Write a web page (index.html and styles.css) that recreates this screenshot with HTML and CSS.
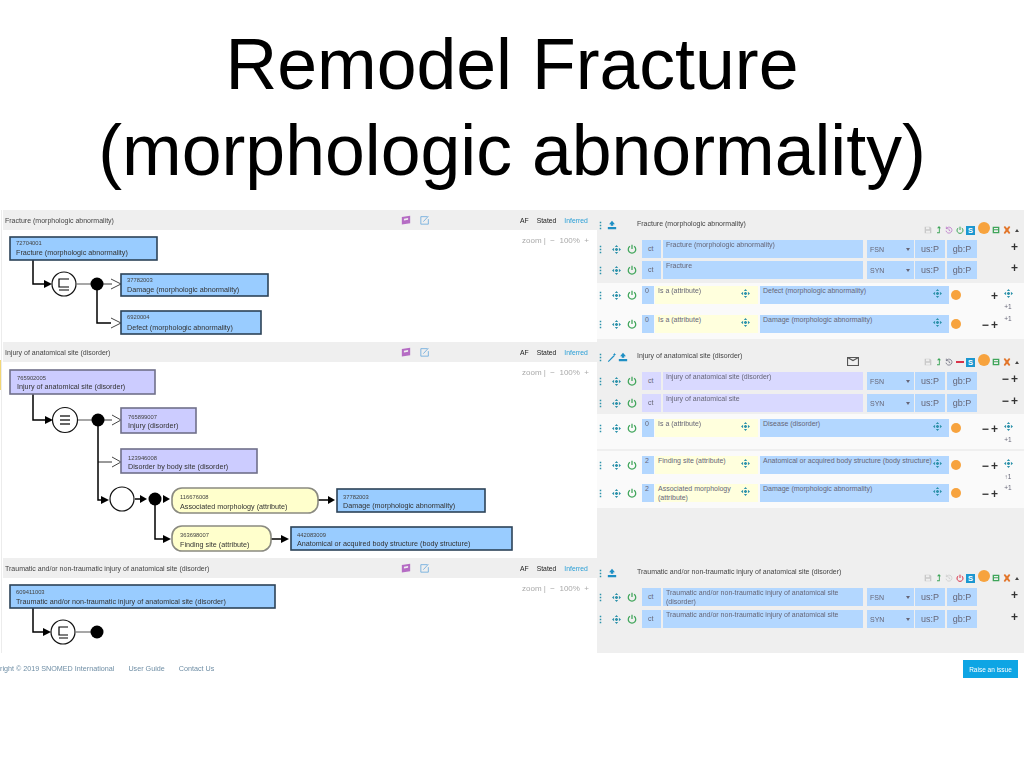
FILE: index.html
```html
<!DOCTYPE html>
<html lang="en">
<head>
<meta charset="UTF-8">
<title>Remodel Fracture (morphologic abnormality)</title>
<link rel="stylesheet" href="styles.css">
</head>
<body>

<svg class="defs" width="0" height="0">
  <symbol id="i-grip" viewBox="0 0 4 12"><path d="M1 1h2v2H1zM1 5h2v2H1zM1 9h2v2H1z"/></symbol>
  <symbol id="i-move" viewBox="0 0 12 12"><path d="M6 0l2.200 2.800H3.800zM6 12l2.200-2.800H3.800zM0 6l2.800-2.200v4.400zM12 6l-2.800-2.200v4.400zM5 4h2v4H5zM4 5h4v2H4z"/></symbol>
  <symbol id="i-power" viewBox="0 0 12 12"><path d="M3.500 2.800a4.500 4.500 0 1 0 5 0M6 1v5" fill="none" stroke="currentColor" stroke-width="1.500"/></symbol>
  <symbol id="i-publish" viewBox="0 0 12 12"><path d="M6 1l3.500 4h-2v2h-3V5h-2zM1 8.500h10V11H1z"/></symbol>
  <symbol id="i-wand" viewBox="0 0 12 12"><path d="M1 11l7-7 1 1-7 7zM9 1l.6 1.400L11 3l-1.400.6L9 5l-.6-1.400L7 3l1.400-.6z"/></symbol>
  <symbol id="i-save" viewBox="0 0 12 12"><path d="M1 1h8l2 2v8H1zM3 2v3h5V2zM3 7v3h6V7z" fill-rule="evenodd"/></symbol>
  <symbol id="i-up" viewBox="0 0 12 12"><path d="M6 0l3 3.500H7.200V11H3v-1.500h2.800v-6H3z"/></symbol>
  <symbol id="i-hist" viewBox="0 0 12 12"><path d="M2 4a4.500 4.500 0 1 1-.5 3M2 1v3h3M6 4v2.500l2 1" fill="none" stroke="currentColor" stroke-width="1.100"/></symbol>
  <symbol id="i-copy" viewBox="0 0 12 12"><path d="M1 1h10v10H1zM3 3v2h6V3zM3 6.500v2.500h6V6.500z" fill-rule="evenodd"/></symbol>
  <symbol id="i-close" viewBox="0 0 12 12"><path d="M1 1.500L3 0l3 3.500L9 0l2 1.500L8 6l3 4.500L9 12 6 8.500 3 12l-2-1.500L4 6z"/></symbol>
  <symbol id="i-book" viewBox="0 0 12 12"><path d="M1 2.500L11 1v9L1 11.500zM3.500 4.500v2l5-.8v-2z" fill-rule="evenodd"/></symbol>
  <symbol id="i-edit" viewBox="0 0 12 12"><path d="M1 2h8M1 2v9h9V5M4 8l6-6.500" fill="none" stroke="currentColor" stroke-width="1"/></symbol>
  <symbol id="i-mail" viewBox="0 0 12 10"><path d="M.5 1.500h11v8H.5zM.5 1.500l5.500 3 5.500-3" fill="none" stroke="currentColor" stroke-width="1.200"/></symbol>
</svg>

<h1 class="title">Remodel Fracture<br>(morphologic abnormality)</h1>

<div class="shot">
  <div class="work">
    <span class="pin"></span>

    <div class="left">
      <div class="lhead">
        <span class="lname">Fracture (morphologic abnormality)</span>
        <svg class="ico c-purple"><use href="#i-book"/></svg>
        <svg class="ico c-sky"><use href="#i-edit"/></svg>
        <span class="tabs"><span>AF</span><span>Stated</span><span class="on">Inferred</span></span>
      </div>
      <svg class="graph graph-a" viewBox="2 230 594 111">
        <text class="zoomline" x="521" y="243">zoom |  −  100%  +</text>
        <path class="thick" d="M32 260V284H44"/>
        <path class="solid" d="M43 280l8 4-8 4z"/>
        <circle class="op" cx="63" cy="284" r="12"/>
        <path class="sym" d="M68 279H58V287H68M58 290H68"/>
        <path class="grey" d="M75 284H90"/>
        <circle class="dot" cx="96" cy="284" r="6.500"/>
        <path class="thick" d="M96 290V323H110"/>
        <path class="thin" d="M102 284H111"/>
        <path class="open" d="M110 279L120 284L110 289M110 318L120 323L110 328"/>
        <rect class="node" x="9" y="237" width="147" height="23"/>
        <text class="sid" x="15" y="245">72704001</text><text class="lab" x="15" y="255">Fracture (morphologic abnormality)</text>
        <rect class="node" x="120" y="274" width="147" height="22"/>
        <text class="sid" x="126" y="282">37782003</text><text class="lab" x="126" y="292">Damage (morphologic abnormality)</text>
        <rect class="node" x="120" y="311" width="140" height="23"/>
        <text class="sid" x="126" y="319">6920004</text><text class="lab" x="126" y="330">Defect (morphologic abnormality)</text>
      </svg>

      <div class="lhead">
        <span class="lname">Injury of anatomical site (disorder)</span>
        <svg class="ico c-purple"><use href="#i-book"/></svg>
        <svg class="ico c-sky"><use href="#i-edit"/></svg>
        <span class="tabs"><span>AF</span><span>Stated</span><span class="on">Inferred</span></span>
      </div>
      <svg class="graph graph-b" viewBox="2 362 594 195">
        <text class="zoomline" x="521" y="375">zoom |  −  100%  +</text>
        <path class="thick" d="M32 394V420H46"/>
        <path class="solid" d="M44 416l8 4-8 4z"/>
        <circle class="op" cx="64" cy="420" r="12.500"/>
        <path class="sym bold" d="M59 416H69M59 420H69M59 424H69"/>
        <path class="grey" d="M77 420H91"/>
        <circle class="dot" cx="97" cy="420" r="6.500"/>
        <path class="thin" d="M103 420H111M97 462H111"/>
        <path class="open" d="M111 415L120 420L111 425M111 457L120 462L111 467"/>
        <path class="thick" d="M97 426V500H104"/>
        <path class="solid" d="M100 496l8 4-8 4z"/>
        <circle class="op" cx="121" cy="499" r="12"/>
        <path class="thick" d="M134 499H140"/>
        <path class="solid" d="M139 495l7 4-7 4z"/>
        <circle class="dot" cx="154" cy="499" r="6.500"/>
        <path class="solid" d="M162 495l7 4-7 4z"/>
        <path class="thick" d="M154 505V539H164"/>
        <path class="solid" d="M162 535l8 4-8 4z"/>
        <path class="thin2" d="M317 500H330M270 539H282"/>
        <path class="solid" d="M327 496l7 4-7 4zM280 535l8 4-8 4z"/>
        <rect class="node lav" x="120" y="408" width="75" height="25"/>
        <text class="sid" x="127" y="419">765899007</text><text class="lab" x="127" y="428">Injury (disorder)</text>
        <rect class="node lav" x="120" y="449" width="136" height="24"/>
        <text class="sid" x="127" y="460">123946008</text><text class="lab" x="127" y="469">Disorder by body site (disorder)</text>
        <rect class="node lav" x="9" y="370" width="145" height="24"/>
        <text class="sid" x="16" y="380">765902005</text><text class="lab" x="16" y="389">Injury of anatomical site (disorder)</text>
        <rect class="pill" x="171" y="488" width="146" height="25" rx="10"/>
        <text class="sid" x="179" y="499">116676008</text><text class="lab" x="179" y="509">Associated morphology (attribute)</text>
        <rect class="pill" x="171" y="526" width="99" height="25" rx="10"/>
        <text class="sid" x="179" y="537">363698007</text><text class="lab" x="179" y="547">Finding site (attribute)</text>
        <rect class="node" x="336" y="489" width="148" height="23"/>
        <text class="sid" x="342" y="499">37782003</text><text class="lab" x="342" y="508">Damage (morphologic abnormality)</text>
        <rect class="node" x="290" y="527" width="221" height="23"/>
        <text class="sid" x="296" y="537">442083009</text><text class="lab" x="296" y="546">Anatomical or acquired body structure (body structure)</text>
      </svg>

      <div class="lhead">
        <span class="lname">Traumatic and/or non-traumatic injury of anatomical site (disorder)</span>
        <svg class="ico c-purple"><use href="#i-book"/></svg>
        <svg class="ico c-sky"><use href="#i-edit"/></svg>
        <span class="tabs"><span>AF</span><span>Stated</span><span class="on">Inferred</span></span>
      </div>
      <svg class="graph graph-c" viewBox="2 578 594 74">
        <text class="zoomline" x="521" y="591">zoom |  −  100%  +</text>
        <path class="thick" d="M32 608V632H44"/>
        <path class="solid" d="M42 628l8 4-8 4z"/>
        <circle class="op" cx="62" cy="632" r="12"/>
        <path class="sym" d="M67 627H58V635H67M58 638H67"/>
        <path class="grey" d="M75 632H90"/>
        <circle class="dot" cx="96" cy="632" r="6.500"/>
        <rect class="node" x="9" y="585" width="265" height="23"/>
        <text class="sid" x="15" y="594">609411003</text><text class="lab" x="15" y="604">Traumatic and/or non-traumatic injury of anatomical site (disorder)</text>
      </svg>
    </div>

    <div class="right">

      <div class="chead head-a">
        <span class="tools">
          <svg class="grip c-teal"><use href="#i-grip"/></svg>
          <svg class="ico c-blue"><use href="#i-publish"/></svg>
        </span>
        <span class="cname">Fracture (morphologic abnormality)</span>
        <span class="acts">
          <svg class="ico-s c-grey"><use href="#i-save"/></svg>
          <svg class="ico-s c-green"><use href="#i-up"/></svg>
          <svg class="ico-s c-purple"><use href="#i-hist"/></svg>
          <svg class="ico-s c-green"><use href="#i-power"/></svg>
          <span class="sbox">S</span>
          <span class="ball ball-up"></span>
          <svg class="ico-s c-green"><use href="#i-copy"/></svg>
          <svg class="ico-s c-orange"><use href="#i-close"/></svg>
          <span class="caret"></span>
        </span>
      </div>
      <div class="descs tight">
        <div class="row">
          <svg class="grip c-teal"><use href="#i-grip"/></svg><svg class="mv c-teal"><use href="#i-move"/></svg><svg class="pw c-green"><use href="#i-power"/></svg>
          <span class="cell ct">ct</span><span class="cell term">Fracture (morphologic abnormality)</span><span class="cell sel">FSN</span><span class="cell acc">us:P</span><span class="cell acc acc2">gb:P</span><span class="ops ops-d">+</span>
        </div>
        <div class="row">
          <svg class="grip c-teal"><use href="#i-grip"/></svg><svg class="mv c-teal"><use href="#i-move"/></svg><svg class="pw c-green"><use href="#i-power"/></svg>
          <span class="cell ct">ct</span><span class="cell term">Fracture</span><span class="cell sel">SYN</span><span class="cell acc">us:P</span><span class="cell acc acc2">gb:P</span><span class="ops ops-d">+</span>
        </div>
      </div>
      <div class="rels rels-a">
        <div class="row">
          <svg class="grip c-teal"><use href="#i-grip"/></svg><svg class="mv c-teal"><use href="#i-move"/></svg><svg class="pw c-green"><use href="#i-power"/></svg>
          <span class="cell num">0</span><span class="cell attr">Is a (attribute)<svg class="mv-in c-teal"><use href="#i-move"/></svg></span><span class="cell target">Defect (morphologic abnormality)<svg class="mv-in c-teal"><use href="#i-move"/></svg></span><span class="ball"></span><span class="ops ops-r">+</span>
          <span class="side"><svg class="mv c-teal"><use href="#i-move"/></svg><span>+1</span></span>
        </div>
        <div class="row">
          <svg class="grip c-teal"><use href="#i-grip"/></svg><svg class="mv c-teal"><use href="#i-move"/></svg><svg class="pw c-green"><use href="#i-power"/></svg>
          <span class="cell num">0</span><span class="cell attr">Is a (attribute)<svg class="mv-in c-teal"><use href="#i-move"/></svg></span><span class="cell target">Damage (morphologic abnormality)<svg class="mv-in c-teal"><use href="#i-move"/></svg></span><span class="ball"></span><span class="ops ops-r">− +</span>
          <span class="side"><span>+1</span></span>
        </div>
      </div>

      <div class="chead head-b">
        <span class="tools">
          <svg class="grip c-teal"><use href="#i-grip"/></svg>
          <svg class="ico c-blue tool-wand"><use href="#i-wand"/></svg>
          <svg class="ico c-blue"><use href="#i-publish"/></svg>
        </span>
        <span class="cname cname-b">Injury of anatomical site (disorder)</span>
        <svg class="mail"><use href="#i-mail"/></svg>
        <span class="acts">
          <svg class="ico-s c-grey"><use href="#i-save"/></svg>
          <svg class="ico-s c-green"><use href="#i-up"/></svg>
          <svg class="ico-s c-slate"><use href="#i-hist"/></svg>
          <span class="dash"></span>
          <span class="sbox">S</span>
          <span class="ball ball-up"></span>
          <svg class="ico-s c-green"><use href="#i-copy"/></svg>
          <svg class="ico-s c-orange"><use href="#i-close"/></svg>
          <span class="caret"></span>
        </span>
      </div>
      <div class="descs">
        <div class="row lav-row">
          <svg class="grip c-teal"><use href="#i-grip"/></svg><svg class="mv c-teal"><use href="#i-move"/></svg><svg class="pw c-green"><use href="#i-power"/></svg>
          <span class="cell ct">ct</span><span class="cell term">Injury of anatomical site (disorder)</span><span class="cell sel">FSN</span><span class="cell acc">us:P</span><span class="cell acc acc2">gb:P</span><span class="ops ops-d">− +</span>
        </div>
        <div class="row lav-row">
          <svg class="grip c-teal"><use href="#i-grip"/></svg><svg class="mv c-teal"><use href="#i-move"/></svg><svg class="pw c-green"><use href="#i-power"/></svg>
          <span class="cell ct">ct</span><span class="cell term">Injury of anatomical site</span><span class="cell sel">SYN</span><span class="cell acc">us:P</span><span class="cell acc acc2">gb:P</span><span class="ops ops-d">− +</span>
        </div>
      </div>
      <div class="rels rels-b1">
        <div class="row">
          <svg class="grip c-teal"><use href="#i-grip"/></svg><svg class="mv c-teal"><use href="#i-move"/></svg><svg class="pw c-green"><use href="#i-power"/></svg>
          <span class="cell num">0</span><span class="cell attr">Is a (attribute)<svg class="mv-in c-teal"><use href="#i-move"/></svg></span><span class="cell target">Disease (disorder)<svg class="mv-in c-teal"><use href="#i-move"/></svg></span><span class="ball"></span><span class="ops ops-r">− +</span>
          <span class="side"><svg class="mv c-teal"><use href="#i-move"/></svg><span>+1</span></span>
        </div>
      </div>
      <div class="rels rels-b2">
        <div class="row">
          <svg class="grip c-teal"><use href="#i-grip"/></svg><svg class="mv c-teal"><use href="#i-move"/></svg><svg class="pw c-green"><use href="#i-power"/></svg>
          <span class="cell num">2</span><span class="cell attr">Finding site (attribute)<svg class="mv-in c-teal"><use href="#i-move"/></svg></span><span class="cell target">Anatomical or acquired body structure (body structure)<svg class="mv-in c-teal"><use href="#i-move"/></svg></span><span class="ball"></span><span class="ops ops-r">− +</span>
          <span class="side"><svg class="mv c-teal"><use href="#i-move"/></svg><span>↑1</span></span>
        </div>
        <div class="row">
          <svg class="grip c-teal"><use href="#i-grip"/></svg><svg class="mv c-teal"><use href="#i-move"/></svg><svg class="pw c-green"><use href="#i-power"/></svg>
          <span class="cell num">2</span><span class="cell attr">Associated morphology (attribute)<svg class="mv-in c-teal"><use href="#i-move"/></svg></span><span class="cell target">Damage (morphologic abnormality)<svg class="mv-in c-teal"><use href="#i-move"/></svg></span><span class="ball"></span><span class="ops ops-r">− +</span>
          <span class="side"><span>+1</span></span>
        </div>
      </div>

      <div class="chead head-c">
        <span class="tools">
          <svg class="grip c-teal"><use href="#i-grip"/></svg>
          <svg class="ico c-blue"><use href="#i-publish"/></svg>
        </span>
        <span class="cname">Traumatic and/or non-traumatic injury of anatomical site (disorder)</span>
        <span class="acts">
          <svg class="ico-s c-grey"><use href="#i-save"/></svg>
          <svg class="ico-s c-green"><use href="#i-up"/></svg>
          <svg class="ico-s c-grey"><use href="#i-hist"/></svg>
          <svg class="ico-s c-red"><use href="#i-power"/></svg>
          <span class="sbox">S</span>
          <span class="ball ball-up"></span>
          <svg class="ico-s c-green"><use href="#i-copy"/></svg>
          <svg class="ico-s c-orange"><use href="#i-close"/></svg>
          <span class="caret"></span>
        </span>
      </div>
      <div class="descs">
        <div class="row">
          <svg class="grip c-teal"><use href="#i-grip"/></svg><svg class="mv c-teal"><use href="#i-move"/></svg><svg class="pw c-green"><use href="#i-power"/></svg>
          <span class="cell ct">ct</span><span class="cell term">Traumatic and/or non-traumatic injury of anatomical site (disorder)</span><span class="cell sel">FSN</span><span class="cell acc">us:P</span><span class="cell acc acc2">gb:P</span><span class="ops ops-d">+</span>
        </div>
        <div class="row">
          <svg class="grip c-teal"><use href="#i-grip"/></svg><svg class="mv c-teal"><use href="#i-move"/></svg><svg class="pw c-green"><use href="#i-power"/></svg>
          <span class="cell ct">ct</span><span class="cell term">Traumatic and/or non-traumatic injury of anatomical site</span><span class="cell sel">SYN</span><span class="cell acc">us:P</span><span class="cell acc acc2">gb:P</span><span class="ops ops-d">+</span>
        </div>
      </div>

    </div>
  </div>

  <div class="foot">
    <div class="links">
      <span>right © 2019 SNOMED International</span>
      <span>User Guide</span>
      <span>Contact Us</span>
    </div>
    <button class="issue">Raise an issue</button>
  </div>
</div>

</body>
</html>
```

FILE: styles.css
```css
body {
    margin: 0;
    background: #fff;
    font-family: "Liberation Sans", Arial, sans-serif;
    color: #000;
}
.defs {
    display: block;
    height: 0;
}
.title {
    margin: 0;
    height: 189px;
    padding: 21px 0 0;
    font-size: 71.6px;
    font-weight: 400;
    line-height: 86px;
    text-align: center;
}

/* the pasted screenshot */
.shot {
    overflow: hidden;
    filter: blur(0.45px);
}
.work {
    display: flex;
    height: 443px;
    position: relative;
}
.pin {
    position: absolute;
    left: 0;
    top: 150px;
    width: 1px;
    height: 30px;
    background: #f2d675;
}

/* left column: diagrams */
.left {
    width: 594px;
    margin-left: 1px;
    padding-left: 1px;
    border-left: 1px solid #ececec;
    box-sizing: content-box;
    flex: none;
}
.lhead {
    display: flex;
    align-items: center;
    height: 20px;
    background: #efefef;
    font-size: 7px;
    color: #444;
}
.lhead + .graph + .lhead {
    margin-top: 1px;
}
.lname {
    width: 398px;
    padding-left: 2px;
    box-sizing: border-box;
    white-space: nowrap;
}
.tabs {
    display: flex;
    gap: 8px;
    margin-left: 90px;
    font-size: 6.800px;
    color: #222;
}
.tabs .on {
    color: #2a9fd6;
}
.graph {
    display: block;
    width: 594px;
    background: #fff;
}
.graph-a { height: 111px; }
.graph-b { height: 195px; }
.graph-c { height: 74px; }
.zoomline {
    font-size: 8px;
    fill: #aaa;
    white-space: pre;
}
.thick, .thin, .thin2, .grey, .sym, .open {
    fill: none;
    stroke: #000;
}
.thick { stroke-width: 1.5; }
.thin { stroke-width: 0.8; }
.thin2 { stroke-width: 1.3; }
.grey { stroke: #777; stroke-width: 1.3; }
.sym { stroke-width: 1.2; }
.sym.bold { stroke-width: 1.5; stroke: #333; }
.open { stroke: #444; stroke-width: 1; }
.solid { fill: #000; }
.dot { fill: #000; }
.op {
    fill: #fff;
    stroke: #111;
    stroke-width: 1.2;
}
.node {
    fill: #99ccff;
    stroke: #2c4358;
    stroke-width: 1.6;
}
.node.lav {
    fill: #ccccff;
    stroke: #70708a;
}
.pill {
    fill: #ffffcc;
    stroke: #8a8a80;
    stroke-width: 1.6;
}
.sid {
    font-size: 5.800px;
    fill: #444;
}
.lab {
    font-size: 7.200px;
    fill: #333;
}

/* icons */
.ico {
    width: 10px;
    height: 10px;
    flex: none;
    fill: currentColor;
}
.lhead .ico + .ico {
    margin-left: 9px;
}
.ico-s {
    width: 8px;
    height: 8px;
    flex: none;
    fill: currentColor;
}
.grip {
    width: 3px;
    height: 9px;
    flex: none;
    fill: currentColor;
}
.mv {
    width: 9px;
    height: 9px;
    flex: none;
    fill: currentColor;
}
.pw {
    width: 10px;
    height: 10px;
    flex: none;
    fill: currentColor;
}
.c-purple { color: #b56cc4; }
.c-sky { color: #6aa9dc; }
.c-teal { color: #2f93ab; }
.c-blue { color: #1e8fc4; }
.c-green { color: #3fa55a; }
.c-grey { color: #c9c9c9; }
.c-slate { color: #667; }
.c-orange { color: #e2762b; }
.c-red { color: #d9344a; }

/* right column: concept editor */
.right {
    flex: 1;
    background: #efefef;
    font-size: 7px;
    color: #667;
}
.chead {
    display: flex;
    align-items: flex-end;
}
.head-a { height: 30px; }
.head-b { height: 33px; }
.head-c { height: 80px; }
.tools {
    display: flex;
    align-items: center;
    width: 40px;
    height: 10px;
    margin-bottom: 10px;
    flex: none;
}
.tools .grip {
    margin: 0 5px 0 2px;
}
.tool-wand {
    margin-right: 1px;
}
.cname {
    line-height: 10px;
    margin-bottom: 11px;
    font-size: 7px;
    color: #444;
    white-space: nowrap;
}
.cname-b {
    width: 210px;
}
.mail {
    width: 12px;
    height: 10px;
    margin-bottom: 6px;
    color: #555;
    flex: none;
}
.acts {
    display: flex;
    align-items: center;
    gap: 2.500px;
    height: 10px;
    margin-left: auto;
    margin-bottom: 5px;
    padding-right: 5px;
}
.sbox {
    width: 9px;
    height: 9px;
    background: #1c97d0;
    color: #fff;
    font-size: 7.500px;
    font-weight: 700;
    line-height: 9px;
    text-align: center;
}
.dash {
    width: 8px;
    height: 2px;
    background: #d9344a;
}
.caret {
    width: 0;
    height: 0;
    margin-left: 2px;
    border: 2.500px solid transparent;
    border-top: 0;
    border-bottom: 3px solid #444;
}
.ball {
    width: 10px;
    height: 10px;
    margin: 4px 0 0 2px;
    border-radius: 50%;
    background: #f7a33e;
    flex: none;
}
.ball-up {
    width: 12px;
    height: 12px;
    margin: -5px 0 0 0;
}
.descs {
    display: flex;
    flex-direction: column;
    gap: 4px;
}
.tight {
    gap: 3px;
}
.row {
    display: flex;
    height: 18px;
    align-items: flex-start;
}
.row > .grip {
    margin: 5px 0 0 2px;
}
.row > .mv {
    margin: 5px 0 0 10px;
}
.row > .pw {
    margin: 4px 5px 0 6px;
}
.cell {
    display: block;
    height: 18px;
    padding: 1px 0 0 3px;
    box-sizing: border-box;
    background: #b3d7ff;
    line-height: 8.500px;
    flex: none;
    position: relative;
}
.ct {
    width: 19px;
    padding: 5px 0 0 6px;
}
.term {
    width: 200px;
    margin-left: 2px;
    padding-right: 8px;
}
.sel {
    width: 47px;
    margin-left: 4px;
    padding-top: 6px;
}
.sel::after {
    content: "";
    position: absolute;
    right: 4px;
    top: 8px;
    border: 2px solid transparent;
    border-top: 3px solid #667;
    border-bottom: 0;
}
.acc {
    width: 30px;
    margin-left: 1px;
    padding: 5px 0 0 0;
    text-align: center;
    font-size: 9px;
}
.acc2 {
    margin-left: 2px;
}
.lav-row .ct, .lav-row .term {
    background: #d9d9ff;
}
.ops {
    font-size: 12px;
    line-height: 14px;
    font-weight: 700;
    color: #333;
    white-space: nowrap;
}
.ops-d {
    margin-left: auto;
    padding-right: 6px;
    word-spacing: -1px;
}
.rels {
    background: #fafafa;
}
.rels .row + .row {
    margin-top: 11px;
}
.rels-a {
    margin-top: 4px;
    height: 56px;
    padding-top: 3px;
    box-sizing: border-box;
}
.rels-b1 {
    margin-top: 2px;
    height: 35px;
    padding-top: 5px;
    box-sizing: border-box;
}
.rels-b2 {
    margin-top: 2px;
    height: 57px;
    padding-top: 5px;
    box-sizing: border-box;
}
.rels-b2 .row + .row {
    margin-top: 10px;
}
.num {
    width: 12px;
    padding-left: 3px;
}
.attr {
    width: 103px;
    margin-left: 1px;
    padding: 1px 24px 0 3px;
    background: #ffffdd;
}
.target {
    width: 189px;
    margin-left: 2px;
    padding: 1px 14px 0 3px;
    background: #b3d7ff;
    white-space: nowrap;
}
.mv-in {
    position: absolute;
    right: 7px;
    top: 3px;
    width: 9px;
    height: 9px;
    fill: currentColor;
}
.attr .mv-in {
    right: 8px;
}
.ops-r {
    width: 33px;
    margin-left: 4px;
    padding: 3px 0 0 0;
    box-sizing: border-box;
    text-align: right;
    word-spacing: -1px;
}
.side {
    display: flex;
    flex-direction: column;
    align-items: center;
    gap: 5px;
    width: 20px;
    font-size: 6.500px;
    flex: none;
}
.side .mv {
    margin: 3px 0 0 0;
}

/* footer */
.foot {
    display: flex;
    justify-content: space-between;
    height: 115px;
    padding: 7px 6px 0 0;
    box-sizing: border-box;
}
.links {
    display: flex;
    gap: 14px;
    font-size: 7.200px;
    line-height: 18px;
    color: #6f8ea5;
}
.issue {
    width: 55px;
    height: 18px;
    padding: 0;
    border: none;
    background: #0ea5e4;
    color: #fff;
    font-family: inherit;
    font-size: 6.500px;
}
```
